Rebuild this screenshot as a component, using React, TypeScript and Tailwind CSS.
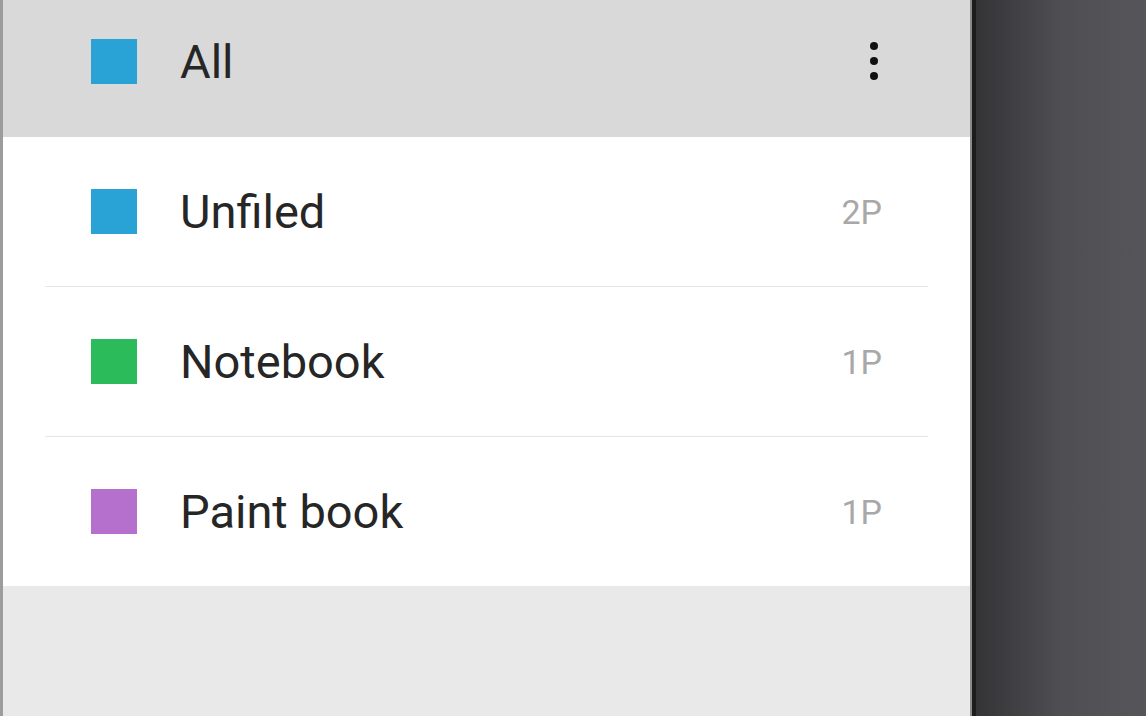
const books = [
  { name: "Unfiled", color: "bg-[#29a3d6]", count: "2P" },
  { name: "Notebook", color: "bg-[#2bbb5a]", count: "1P" },
  { name: "Paint book", color: "bg-[#b56fcc]", count: "1P" },
];

export default function App() {
  return (
    <div className="flex h-[716px] w-[1146px] overflow-hidden font-['Roboto',sans-serif]">
      <div className="w-[3px] bg-[#9c9c9c]" />

      <div className="flex w-[967px] flex-col bg-[#e9e9e9]">
        <div className="flex h-[137px] items-center bg-[#d9d9d9] pb-[15px] pl-[88px] pr-[92px]">
          <div className="h-[45px] w-[46px] bg-[#29a3d6]" />
          <span className="ml-[43px] flex-1 text-[47px] leading-none text-[#262626]">All</span>
          <div className="flex flex-col gap-[7px]">
            <span className="h-[8px] w-[8px] rounded-full bg-[#111]" />
            <span className="h-[8px] w-[8px] rounded-full bg-[#111]" />
            <span className="h-[8px] w-[8px] rounded-full bg-[#111]" />
          </div>
        </div>

        <div className="bg-white">
          {books.map((b, idx) => (
            <div key={idx}>
              <div className="flex h-[149px] items-center pl-[88px] pr-[88px]">
                <div className={`h-[45px] w-[46px] ${b.color}`} />
                <span className="ml-[43px] flex-1 text-[47px] leading-none text-[#262626]">{b.name}</span>
                <span className="text-[34px] leading-none text-[#a8a8a8]">{b.count}</span>
              </div>
              {idx < 2 && <div className="mx-[42px] h-px bg-[#e6e6e6]" />}
            </div>
          ))}
        </div>
      </div>

      <div className="w-[2px] bg-[#8a8a8a]" />
      <div className="w-[4px] bg-[#1c1c1c]" />
      <div className="flex-1 bg-gradient-to-r from-[#343437] via-[#4f4f53] to-[#56565a]" />
    </div>
  );
}
